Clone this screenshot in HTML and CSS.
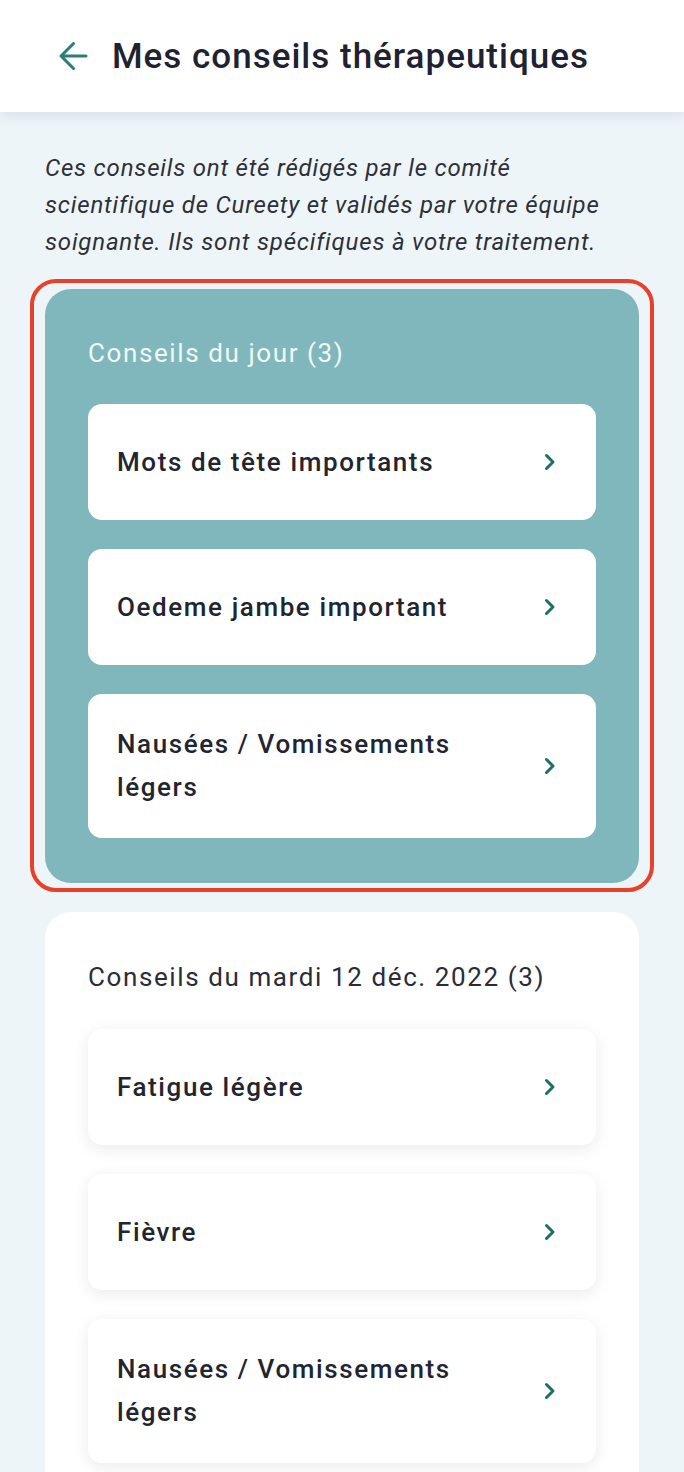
FILE: index.html
```html
<!DOCTYPE html>
<html lang="fr">
<head>
<meta charset="utf-8">
<title>Mes conseils thérapeutiques</title>
<link rel="stylesheet" href="styles.css">
</head>
<body>
<header class="topbar">
  <svg class="back" width="30" height="30" viewBox="0 0 30 30" aria-hidden="true">
    <path d="M28 15H3M15.5 2.5L3 15l12.5 12.5" fill="none" stroke="#2a7d78" stroke-width="3" stroke-linecap="round" stroke-linejoin="round"/>
  </svg>
  <h1 class="title">Mes conseils thérapeutiques</h1>
</header>

<main class="content">
  <p class="intro">Ces conseils ont été rédigés par le comité scientifique de Cureety et validés par votre équipe soignante. Ils sont spécifiques à votre traitement.</p>

  <section class="panel panel-today">
    <h2 class="panel-title">Conseils du jour (3)</h2>
    <ul class="list">
      <li class="item"><span class="item-label">Mots de tête importants</span><svg class="chev" width="12" height="18" viewBox="0 0 12 18"><path d="M2.5 2.5L9 9l-6.5 6.5" fill="none" stroke="#1f6c6c" stroke-width="3" stroke-linecap="round" stroke-linejoin="round"/></svg></li>
      <li class="item"><span class="item-label">Oedeme jambe important</span><svg class="chev" width="12" height="18" viewBox="0 0 12 18"><path d="M2.5 2.5L9 9l-6.5 6.5" fill="none" stroke="#1f6c6c" stroke-width="3" stroke-linecap="round" stroke-linejoin="round"/></svg></li>
      <li class="item"><span class="item-label">Nausées / Vomissements légers</span><svg class="chev" width="12" height="18" viewBox="0 0 12 18"><path d="M2.5 2.5L9 9l-6.5 6.5" fill="none" stroke="#1f6c6c" stroke-width="3" stroke-linecap="round" stroke-linejoin="round"/></svg></li>
    </ul>
  </section>

  <section class="panel panel-past">
    <h2 class="panel-title">Conseils du mardi 12 déc. 2022 (3)</h2>
    <ul class="list">
      <li class="item"><span class="item-label">Fatigue légère</span><svg class="chev" width="12" height="18" viewBox="0 0 12 18"><path d="M2.5 2.5L9 9l-6.5 6.5" fill="none" stroke="#1f6c6c" stroke-width="3" stroke-linecap="round" stroke-linejoin="round"/></svg></li>
      <li class="item"><span class="item-label">Fièvre</span><svg class="chev" width="12" height="18" viewBox="0 0 12 18"><path d="M2.5 2.5L9 9l-6.5 6.5" fill="none" stroke="#1f6c6c" stroke-width="3" stroke-linecap="round" stroke-linejoin="round"/></svg></li>
      <li class="item"><span class="item-label">Nausées / Vomissements légers</span><svg class="chev" width="12" height="18" viewBox="0 0 12 18"><path d="M2.5 2.5L9 9l-6.5 6.5" fill="none" stroke="#1f6c6c" stroke-width="3" stroke-linecap="round" stroke-linejoin="round"/></svg></li>
    </ul>
  </section>
</main>
</body>
</html>
```

FILE: styles.css
```css
* { box-sizing: border-box; }

html, body {
  margin: 0;
  padding: 0;
}

body {
  background: #eef5f9;
  font-family: Roboto, "Noto Sans", "Liberation Sans", sans-serif;
  color: #22252f;
  height: 1472px;
  overflow: hidden;
}

.topbar {
  height: 112px;
  background: #ffffff;
  display: flex;
  align-items: center;
  padding-left: 58px;
  gap: 24px;
  box-shadow: 0 4px 12px rgba(30, 50, 70, 0.10);
  position: relative;
  z-index: 2;
}

.back {
  flex: none;
  display: block;
}

.title {
  margin: 0;
  font-size: 35px;
  letter-spacing: 1px;
  font-weight: 500;
  color: #1f2231;
}

.content {
  padding: 38px 45px 0;
}

.intro {
  margin: 0 0 28px;
  font-style: italic;
  font-size: 24px;
  letter-spacing: 0.8px;
  line-height: 37px;
  color: #2d303a;
}

.panel {
  border-radius: 26px;
  padding: 49px 43px 45px;
}

.panel-today {
  background: #80b7bc;
  position: relative;
}

.panel-today::after {
  content: "";
  position: absolute;
  top: -10px;
  bottom: -9px;
  left: -15px;
  right: -15px;
  border: 4px solid #e8402a;
  border-radius: 26px;
  pointer-events: none;
}

.panel-past {
  background: #ffffff;
  margin-top: 29px;
  padding-top: 50px;
}

.panel-title {
  margin: 0 0 36px;
  font-size: 26px;
  letter-spacing: 1.6px;
  line-height: 30px;
  font-weight: 400;
  color: #2a2d38;
}

.panel-today .panel-title {
  color: #f2f7f7;
}

.panel-past .panel-title {
  margin-bottom: 37px;
}

.list {
  list-style: none;
  margin: 0;
  padding: 0;
  display: flex;
  flex-direction: column;
  gap: 29px;
}

.item {
  background: #ffffff;
  border-radius: 14px;
  min-height: 116px;
  padding: 29px 40px 29px 29px;
  display: flex;
  align-items: center;
  justify-content: space-between;
  gap: 24px;
}

.panel-past .item {
  box-shadow: 0 4px 16px rgba(20, 30, 50, 0.09);
}

.item-label {
  font-size: 26px;
  letter-spacing: 1.6px;
  line-height: 43px;
  font-weight: 500;
  color: #22252f;
}

.chev {
  flex: none;
  display: block;
}
```
